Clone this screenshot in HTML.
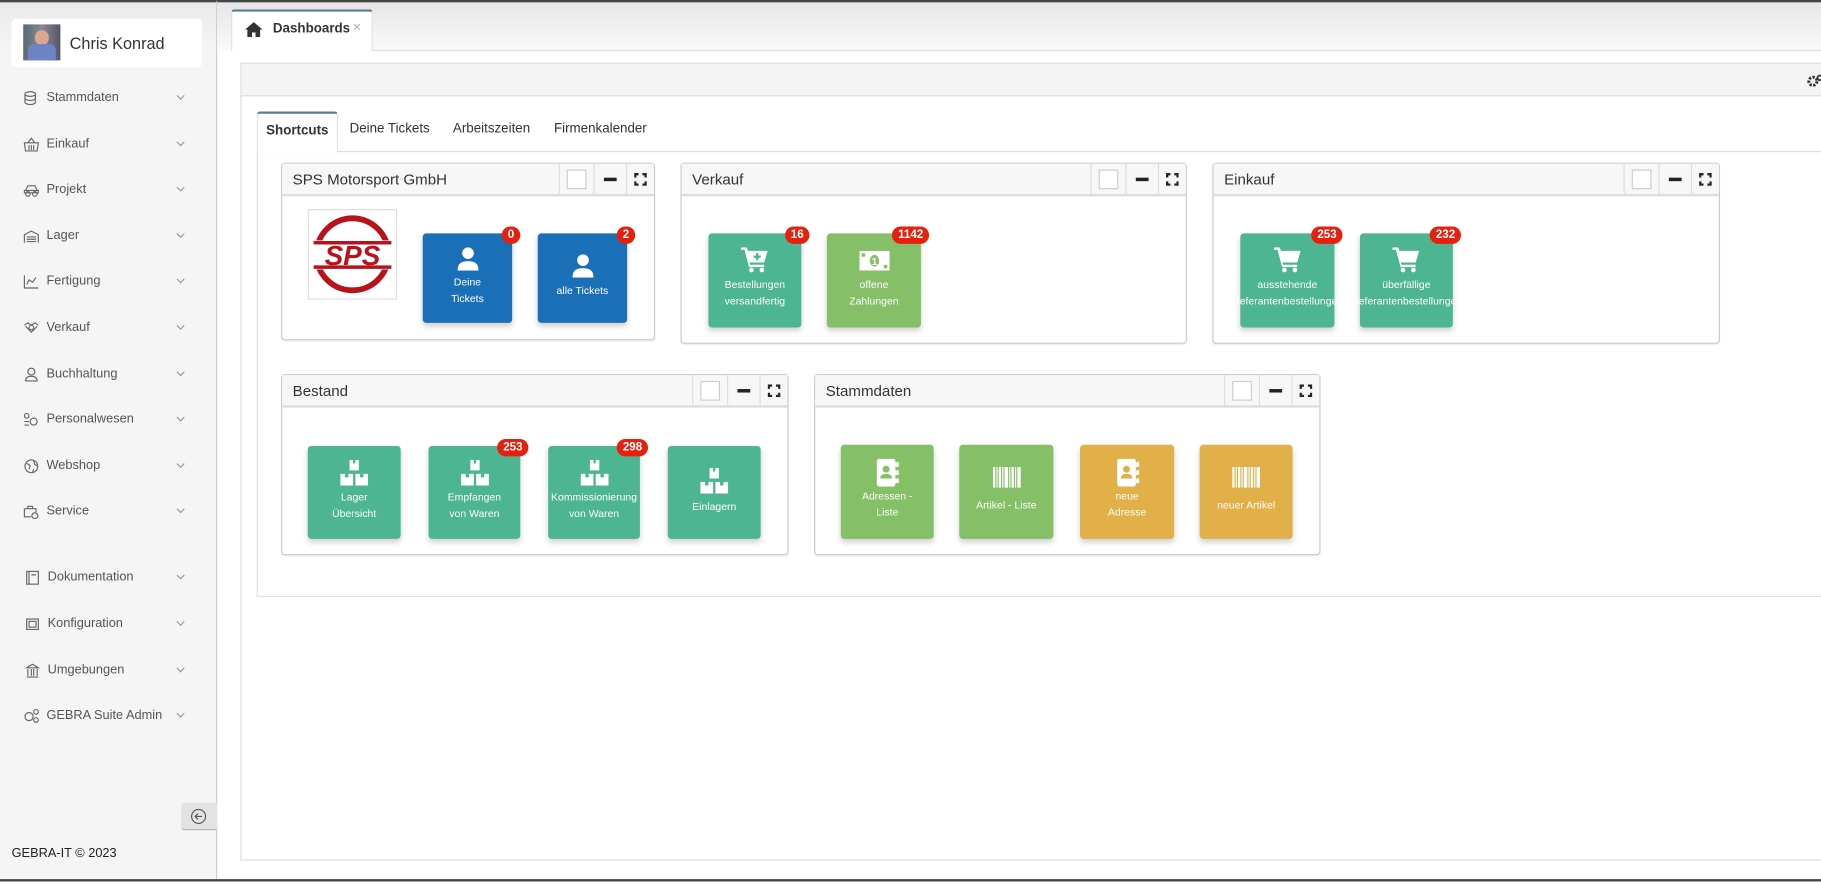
<!DOCTYPE html>
<html><head><meta charset="utf-8"><style>
*{box-sizing:border-box;margin:0;padding:0}
html,body{width:1821px;height:882px;overflow:hidden;background:#fff}
#w{position:absolute;left:0;top:0;width:1568px;height:759px;transform:scale(1.16135);transform-origin:0 0;font-family:"Liberation Sans",sans-serif;color:#333;background:#fff}
.abs{position:absolute}
#side{left:0;top:0;width:187px;height:759px;background:linear-gradient(#e9e9e9,#f5f5f5 40px);border-right:1px solid #cfcfcf;border-top:2px solid #444}
.user{left:10px;top:14px;width:164px;height:42px;background:#fff;border-radius:4px}
.mi{position:absolute;left:20px;font-size:11px;color:#555;height:16px;line-height:16px}
.mi svg{position:absolute;left:0;top:2px}
.mi span{position:absolute;left:20px;white-space:nowrap}
.chev{position:absolute;left:151px;width:5px;height:5px;border-right:1px solid #999;border-bottom:1px solid #999;transform:rotate(45deg)}
#top{left:187px;top:0;width:1381px;height:44px;background:linear-gradient(#e6e6e6,#fafafa);border-top:2px solid #444}
.w{position:absolute;border:1px solid #ccc;border-radius:3px;background:#fff;box-shadow:0 1px 1px rgba(0,0,0,.08)}
.wh{height:28px;background:#f7f7f7;border-bottom:2px solid #ddd;font-size:13px;line-height:28px;padding-left:9px;color:#333;position:relative}
.btns{position:absolute;right:0;top:0;height:26px;display:flex}
.btns div{border-left:1px solid #ddd;height:26px;position:relative}
.t{position:absolute;width:78px;height:80px;border-radius:3px;color:#fff;font-size:9px;text-align:center;line-height:14px;box-shadow:0 3px 5px rgba(0,0,0,.18)}
.t .ic{position:absolute;left:0;right:0;top:12px;display:flex;justify-content:center}
.t .lb{position:absolute;left:-10px;right:-10px;top:37px;white-space:nowrap;overflow:hidden}
.bl{background:#1b6fb6}.gr{background:#4db592}.lg{background:#85bf67}.or{background:#e1b048}
.bd{position:absolute;top:-6px;right:-7px;background:#e6200e;color:#fff;font-weight:bold;font-size:10px;height:15px;line-height:15px;border-radius:8px;padding:0 5px;min-width:16px;text-align:center}
</style></head><body><div id="w">
<div id="side" class="abs">
 <div class="user abs">
  <div class="abs" style="left:10px;top:5px;width:32px;height:31px;background:linear-gradient(90deg,#5a6a70,#889,#556);overflow:hidden">
   <div class="abs" style="left:10px;top:5px;width:12px;height:13px;border-radius:6px;background:#d8a890"></div>
   <div class="abs" style="left:4px;top:17px;width:24px;height:16px;background:#6e83c4;border-radius:5px 5px 0 0"></div>
  </div>
  <div class="abs" style="left:50px;top:13px;font-size:14px;color:#333">Chris Konrad</div>
 </div>
 <div class="mi" style="top:74px"><svg width="12" height="13" viewBox="0 0 12 13" fill="none" stroke="#666"><ellipse cx="6" cy="3" rx="4.5" ry="2"/><path d="M1.5 3v7c0 1 2 2 4.5 2s4.5-1 4.5-2V3M1.5 6.5c0 1 2 2 4.5 2s4.5-1 4.5-2"/></svg><span>Stammdaten</span><i class="chev" style="top:4px;left:133px"></i></div>
 <div class="mi" style="top:114px"><svg width="14" height="13" viewBox="0 0 14 13" fill="none" stroke="#666"><path d="M1 5h12l-1 7H2zM4 5l3-4 3 4M5 7v4M7 7v4M9 7v4"/></svg><span>Einkauf</span><i class="chev" style="top:4px;left:133px"></i></div>
 <div class="mi" style="top:153px"><svg width="14" height="13" viewBox="0 0 14 13" fill="none" stroke="#666"><path d="M2 7l2-4h6l2 4M1 7h12v2H1z"/><circle cx="4" cy="10" r="2"/><circle cx="10" cy="10" r="2"/></svg><span>Projekt</span><i class="chev" style="top:4px;left:133px"></i></div>
 <div class="mi" style="top:193px"><svg width="14" height="13" viewBox="0 0 14 13" fill="none" stroke="#666"><path d="M1 12V5l6-3 6 3v7M3 7h8M3 9h8M3 11h8"/></svg><span>Lager</span><i class="chev" style="top:4px;left:133px"></i></div>
 <div class="mi" style="top:232px"><svg width="14" height="13" viewBox="0 0 14 13" fill="none" stroke="#666"><path d="M1 1v11h12M3 9l2-4 3 2 3-4"/></svg><span>Fertigung</span><i class="chev" style="top:4px;left:133px"></i></div>
 <div class="mi" style="top:272px"><svg width="14" height="13" viewBox="0 0 14 13" fill="none" stroke="#666"><path d="M1 4l3-2 3 2 3-2 3 2M2 5l5 5 5-5"/><circle cx="7" cy="6" r="2"/></svg><span>Verkauf</span><i class="chev" style="top:4px;left:133px"></i></div>
 <div class="mi" style="top:312px"><svg width="14" height="13" viewBox="0 0 14 13" fill="none" stroke="#666"><circle cx="7" cy="4" r="3"/><path d="M2 12c0-3 2-4 5-4s5 1 5 4z"/></svg><span>Buchhaltung</span><i class="chev" style="top:4px;left:133px"></i></div>
 <div class="mi" style="top:351px"><svg width="14" height="13" viewBox="0 0 14 13" fill="none" stroke="#666"><circle cx="3" cy="3" r="2"/><circle cx="9" cy="8" r="3"/><path d="M1 8h4M1 11h4"/></svg><span>Personalwesen</span><i class="chev" style="top:4px;left:133px"></i></div>
 <div class="mi" style="top:391px"><svg width="14" height="13" viewBox="0 0 14 13" fill="none" stroke="#666"><circle cx="7" cy="6.5" r="5.5"/><path d="M3 4l3 2-1 3M9 2l1 3 2 1M8 12l1-3"/></svg><span>Webshop</span><i class="chev" style="top:4px;left:133px"></i></div>
 <div class="mi" style="top:430px"><svg width="14" height="13" viewBox="0 0 14 13" fill="none" stroke="#666"><path d="M1 4h10v3M1 4v7h6M4 4V2h4v2"/><circle cx="10" cy="10" r="2.5"/></svg><span>Service</span><i class="chev" style="top:4px;left:133px"></i></div>
 <div class="mi" style="top:487px;left:22px"><svg width="12" height="13" viewBox="0 0 12 13" fill="none" stroke="#666"><rect x="1" y="1" width="10" height="11"/><path d="M3 1v11M5 4h4"/></svg><span style="left:19px">Dokumentation</span><i class="chev" style="top:4px;left:131px"></i></div>
 <div class="mi" style="top:527px;left:22px"><svg width="12" height="13" viewBox="0 0 12 13" fill="none" stroke="#666"><rect x="1" y="2" width="10" height="9"/><rect x="3" y="4" width="6" height="5"/></svg><span style="left:19px">Konfiguration</span><i class="chev" style="top:4px;left:131px"></i></div>
 <div class="mi" style="top:567px;left:22px"><svg width="12" height="13" viewBox="0 0 12 13" fill="none" stroke="#666"><path d="M1 4l5-3 5 3zM2 5v6M5 5v6M7 5v6M10 5v6M1 12h10"/></svg><span style="left:19px">Umgebungen</span><i class="chev" style="top:4px;left:131px"></i></div>
 <div class="mi" style="top:606px"><svg width="14" height="13" viewBox="0 0 14 13" fill="none" stroke="#666"><circle cx="5" cy="7" r="3.5"/><circle cx="11" cy="3" r="2"/><circle cx="11" cy="10" r="2"/></svg><span>GEBRA Suite Admin</span><i class="chev" style="top:4px;left:133px"></i></div>
 <div class="abs" style="left:156px;top:689px;width:31px;height:24px;background:#e2e3e5;border-radius:3px 0 0 3px;border-bottom:1px solid #aaa"><svg class="abs" style="left:8px;top:5px" width="14" height="14" viewBox="0 0 14 14" fill="none" stroke="#555"><circle cx="7" cy="7" r="6"/><path d="M10 7H4M6.5 4.5L4 7l2.5 2.5"/></svg></div>
 <div class="abs" style="left:10px;top:727px;font-size:11px;color:#222">GEBRA-IT © 2023</div>
</div>
<div class="abs" style="left:0;top:757px;width:1568px;height:2px;background:#444"></div>
<div id="top" class="abs"></div>
<div class="abs" style="left:320px;top:43px;width:1248px;height:1px;background:#ddd"></div>
<div class="abs" style="left:199px;top:8px;width:122px;height:36px;background:#fff;border:1px solid #ddd;border-top:2px solid #5b7d93;border-bottom:none;border-radius:3px 3px 0 0">
 <svg class="abs" style="left:10px;top:8px" width="17" height="14" viewBox="0 0 17 14"><path d="M8.5 1L1 7.5h2V14h4V10h3v4h4V7.5h2z" fill="#333"/></svg>
 <div class="abs" style="left:35px;top:9px;font-size:11.5px;font-weight:bold;color:#333">Dashboards</div>
 <div class="abs" style="left:104px;top:6px;font-size:12px;color:#aaa">×</div>
</div>
<div class="abs" style="left:207px;top:54px;width:1362px;height:687px;border:1px solid #ddd;border-right:none">
 <div class="abs" style="left:0;top:0;width:1361px;height:28px;background:#f4f4f4;border-bottom:1px solid #ddd"></div>
 <svg class="abs" style="left:1348px;top:8px" width="14" height="13" viewBox="0 0 14 13"><circle cx="5" cy="7" r="3.5" fill="none" stroke="#333" stroke-width="2.5" stroke-dasharray="2 1.2"/><circle cx="11" cy="4" r="2" fill="none" stroke="#333" stroke-width="1.5"/></svg>
</div>
<div class="abs" style="left:221px;top:130px;width:1347px;height:384px;border-left:1px solid #ddd;border-top:1px solid #ddd;border-bottom:1px solid #ddd"></div>
<div class="abs" style="left:221px;top:96px;width:70px;height:35px;background:#fff;border:1px solid #ddd;border-top:2px solid #5b7d93;border-bottom:none;border-radius:3px 3px 0 0;font-size:11.5px;font-weight:bold;color:#333;text-align:center;line-height:31px">Shortcuts</div>
<div class="abs" style="left:301px;top:105px;font-size:11.5px;color:#333">Deine Tickets</div>
<div class="abs" style="left:390px;top:105px;font-size:11.5px;color:#333">Arbeitszeiten</div>
<div class="abs" style="left:477px;top:105px;font-size:11.5px;color:#333">Firmenkalender</div>

<div class="w" style="left:242px;top:140px;width:322px;height:153px"><div class="wh">SPS Motorsport GmbH<div class="btns"><div style="width:30px"><i class="abs" style="left:6px;top:5px;width:17px;height:17px;border:1px solid #ccc;background:#fff"></i></div><div style="width:28px"><i class="abs" style="left:8px;top:12px;width:11px;height:3px;background:#222"></i></div><div style="width:24px"><i class="abs" style="left:6px;top:8px;width:11px;height:11px;border:2px solid #222;clip-path:polygon(0 0,35% 0,35% 100%,65% 100%,65% 0,100% 0,100% 35%,0 35%,0 65%,100% 65%,100% 100%,0 100%)"></i></div></div></div>
 <div class="abs" style="left:22px;top:39px;width:77px;height:78px;border:1px solid #ddd;background:#fff">
  <svg width="75" height="76" viewBox="0 0 75 76"><circle cx="37.5" cy="38" r="31" fill="none" stroke="#b8121b" stroke-width="5"/><rect x="2" y="26" width="71" height="25" fill="#fff"/><path d="M4 28h67M4 49h67" stroke="#b8121b" stroke-width="3"/><text x="37.5" y="47" text-anchor="middle" font-family="Liberation Sans" font-weight="bold" font-style="italic" font-size="24" fill="#b8121b">SPS</text></svg>
 </div>
</div>
<div class="t bl" style="left:364px;top:201px;width:77px;height:77px"><div class="ic" style="top:12px"><svg width="18" height="20" viewBox="0 0 18 20" fill="#fff"><circle cx="9" cy="5" r="5"/><path d="M0 20c0-6 3-8 9-8s9 2 9 8z"/></svg></div><div class="lb" style="top:35px">Deine<br>Tickets</div><span class="bd">0</span></div>
<div class="t bl" style="left:463px;top:201px;width:77px;height:77px"><div class="ic" style="top:18px"><svg width="18" height="20" viewBox="0 0 18 20" fill="#fff"><circle cx="9" cy="5" r="5"/><path d="M0 20c0-6 3-8 9-8s9 2 9 8z"/></svg></div><div class="lb" style="top:42px">alle Tickets</div><span class="bd">2</span></div>

<div class="w" style="left:586px;top:140px;width:436px;height:156px"><div class="wh">Verkauf<div class="btns"><div style="width:30px"><i class="abs" style="left:6px;top:5px;width:17px;height:17px;border:1px solid #ccc;background:#fff"></i></div><div style="width:28px"><i class="abs" style="left:8px;top:12px;width:11px;height:3px;background:#222"></i></div><div style="width:24px"><i class="abs" style="left:6px;top:8px;width:11px;height:11px;border:2px solid #222;clip-path:polygon(0 0,35% 0,35% 100%,65% 100%,65% 0,100% 0,100% 35%,0 35%,0 65%,100% 65%,100% 100%,0 100%)"></i></div></div></div></div>
<div class="t gr" style="left:610px;top:201px;width:80px;height:81px"><div class="ic"><svg width="24" height="22" viewBox="0 0 24 22" fill="#fff"><path d="M0 0h5l1 3h17l-3 10H7l1 2h12v2H7L3 2H0z"/><circle cx="9" cy="19.5" r="2"/><circle cx="18" cy="19.5" r="2"/><path d="M13 5h2v2h2v2h-2v2h-2V9h-2V7h2z" fill="#4db592"/></svg></div><div class="lb">Bestellungen<br>versandfertig</div><span class="bd">16</span></div>
<div class="t lg" style="left:712px;top:201px;width:81px;height:81px"><div class="ic" style="top:15px"><svg width="26" height="17" viewBox="0 0 26 17"><rect width="26" height="17" fill="#fff"/><ellipse cx="13" cy="8.5" rx="4" ry="5" fill="#85bf67"/><text x="13" y="12" text-anchor="middle" font-size="9" font-weight="bold" font-family="Liberation Sans" fill="#fff">1</text><rect x="2" y="2" width="3" height="3" fill="#85bf67"/><rect x="21" y="12" width="3" height="3" fill="#85bf67"/></svg></div><div class="lb">offene<br>Zahlungen</div><span class="bd">1142</span></div>

<div class="w" style="left:1044px;top:140px;width:437px;height:156px"><div class="wh">Einkauf<div class="btns"><div style="width:30px"><i class="abs" style="left:6px;top:5px;width:17px;height:17px;border:1px solid #ccc;background:#fff"></i></div><div style="width:28px"><i class="abs" style="left:8px;top:12px;width:11px;height:3px;background:#222"></i></div><div style="width:24px"><i class="abs" style="left:6px;top:8px;width:11px;height:11px;border:2px solid #222;clip-path:polygon(0 0,35% 0,35% 100%,65% 100%,65% 0,100% 0,100% 35%,0 35%,0 65%,100% 65%,100% 100%,0 100%)"></i></div></div></div></div>
<div class="t gr" style="left:1068px;top:201px;width:81px;height:81px"><div class="ic"><svg width="24" height="22" viewBox="0 0 24 22" fill="#fff"><path d="M0 0h5l1 3h17l-3 10H7l1 2h12v2H7L3 2H0z"/><circle cx="9" cy="19.5" r="2"/><circle cx="18" cy="19.5" r="2"/></svg></div><div class="lb">ausstehende<br>Lieferantenbestellungen</div><span class="bd">253</span></div>
<div class="t gr" style="left:1171px;top:201px;width:80px;height:81px"><div class="ic"><svg width="24" height="22" viewBox="0 0 24 22" fill="#fff"><path d="M0 0h5l1 3h17l-3 10H7l1 2h12v2H7L3 2H0z"/><circle cx="9" cy="19.5" r="2"/><circle cx="18" cy="19.5" r="2"/></svg></div><div class="lb">überfällige<br>Lieferantenbestellungen</div><span class="bd">232</span></div>

<div class="w" style="left:242px;top:322px;width:437px;height:156px"><div class="wh">Bestand<div class="btns"><div style="width:30px"><i class="abs" style="left:6px;top:5px;width:17px;height:17px;border:1px solid #ccc;background:#fff"></i></div><div style="width:28px"><i class="abs" style="left:8px;top:12px;width:11px;height:3px;background:#222"></i></div><div style="width:24px"><i class="abs" style="left:6px;top:8px;width:11px;height:11px;border:2px solid #222;clip-path:polygon(0 0,35% 0,35% 100%,65% 100%,65% 0,100% 0,100% 35%,0 35%,0 65%,100% 65%,100% 100%,0 100%)"></i></div></div></div></div>
<div class="w" style="left:701px;top:322px;width:436px;height:156px"><div class="wh">Stammdaten<div class="btns"><div style="width:30px"><i class="abs" style="left:6px;top:5px;width:17px;height:17px;border:1px solid #ccc;background:#fff"></i></div><div style="width:28px"><i class="abs" style="left:8px;top:12px;width:11px;height:3px;background:#222"></i></div><div style="width:24px"><i class="abs" style="left:6px;top:8px;width:11px;height:11px;border:2px solid #222;clip-path:polygon(0 0,35% 0,35% 100%,65% 100%,65% 0,100% 0,100% 35%,0 35%,0 65%,100% 65%,100% 100%,0 100%)"></i></div></div></div></div>

<div class="t gr" style="left:265px;top:384px;width:80px;height:80px"><div class="ic"><svg width="24" height="22" viewBox="0 0 24 22" fill="#fff"><path d="M8 0h8v9H8zM0 12h11v10H0zM13 12h11v10H13z"/><path d="M11 0h2v3h-2zM4 12h3v3H4zM17 12h3v3h-3z" fill="#4db592"/></svg></div><div class="lb">Lager<br>Übersicht</div></div>
<div class="t gr" style="left:369px;top:384px;width:79px;height:80px"><div class="ic"><svg width="24" height="22" viewBox="0 0 24 22" fill="#fff"><path d="M8 0h8v9H8zM0 12h11v10H0zM13 12h11v10H13z"/><path d="M11 0h2v3h-2zM4 12h3v3H4zM17 12h3v3h-3z" fill="#4db592"/></svg></div><div class="lb">Empfangen<br>von Waren</div><span class="bd">253</span></div>
<div class="t gr" style="left:472px;top:384px;width:79px;height:80px"><div class="ic"><svg width="24" height="22" viewBox="0 0 24 22" fill="#fff"><path d="M8 0h8v9H8zM0 12h11v10H0zM13 12h11v10H13z"/><path d="M11 0h2v3h-2zM4 12h3v3H4zM17 12h3v3h-3z" fill="#4db592"/></svg></div><div class="lb" style="left:-2px;right:-2px">Kommissionierung<br>von Waren</div><span class="bd">298</span></div>
<div class="t gr" style="left:575px;top:384px;width:80px;height:80px"><div class="ic" style="top:19px"><svg width="24" height="22" viewBox="0 0 24 22" fill="#fff"><path d="M8 0h8v9H8zM0 12h11v10H0zM13 12h11v10H13z"/><path d="M11 0h2v3h-2zM4 12h3v3H4zM17 12h3v3h-3z" fill="#4db592"/></svg></div><div class="lb" style="top:45px">Einlagern</div></div>

<div class="t lg" style="left:724px;top:383px;width:80px;height:81px"><div class="ic"><svg width="20" height="24" viewBox="0 0 20 24" fill="#fff"><rect x="1" y="0" width="16" height="24" rx="2"/><rect x="17" y="3" width="3" height="4"/><rect x="17" y="10" width="3" height="4"/><rect x="17" y="17" width="3" height="4"/><circle cx="9" cy="9" r="3" fill="#85bf67"/><path d="M4 17c0-3 2-4 5-4s5 1 5 4z" fill="#85bf67"/></svg></div><div class="lb">Adressen -<br>Liste</div></div>
<div class="t lg" style="left:826px;top:383px;width:81px;height:81px"><div class="ic" style="top:19px"><svg width="24" height="18" viewBox="0 0 24 18" fill="#fff"><path d="M0 0h2v18H0zM3 0h1v18H3zM5 0h2v18H5zM8 0h1v18H8zM10 0h3v18h-3zM14 0h1v18h-1zM16 0h2v18h-2zM19 0h1v18h-1zM21 0h3v18h-3z"/></svg></div><div class="lb" style="top:45px">Artikel - Liste</div></div>
<div class="t or" style="left:930px;top:383px;width:81px;height:81px"><div class="ic"><svg width="20" height="24" viewBox="0 0 20 24" fill="#fff"><rect x="1" y="0" width="16" height="24" rx="2"/><rect x="17" y="3" width="3" height="4"/><rect x="17" y="10" width="3" height="4"/><rect x="17" y="17" width="3" height="4"/><circle cx="9" cy="9" r="3" fill="#e1b048"/><path d="M4 17c0-3 2-4 5-4s5 1 5 4z" fill="#e1b048"/></svg></div><div class="lb">neue<br>Adresse</div></div>
<div class="t or" style="left:1033px;top:383px;width:80px;height:81px"><div class="ic" style="top:19px"><svg width="24" height="18" viewBox="0 0 24 18" fill="#fff"><path d="M0 0h2v18H0zM3 0h1v18H3zM5 0h2v18H5zM8 0h1v18H8zM10 0h3v18h-3zM14 0h1v18h-1zM16 0h2v18h-2zM19 0h1v18h-1zM21 0h3v18h-3z"/></svg></div><div class="lb" style="top:45px">neuer Artikel</div></div>
</div></body></html>
